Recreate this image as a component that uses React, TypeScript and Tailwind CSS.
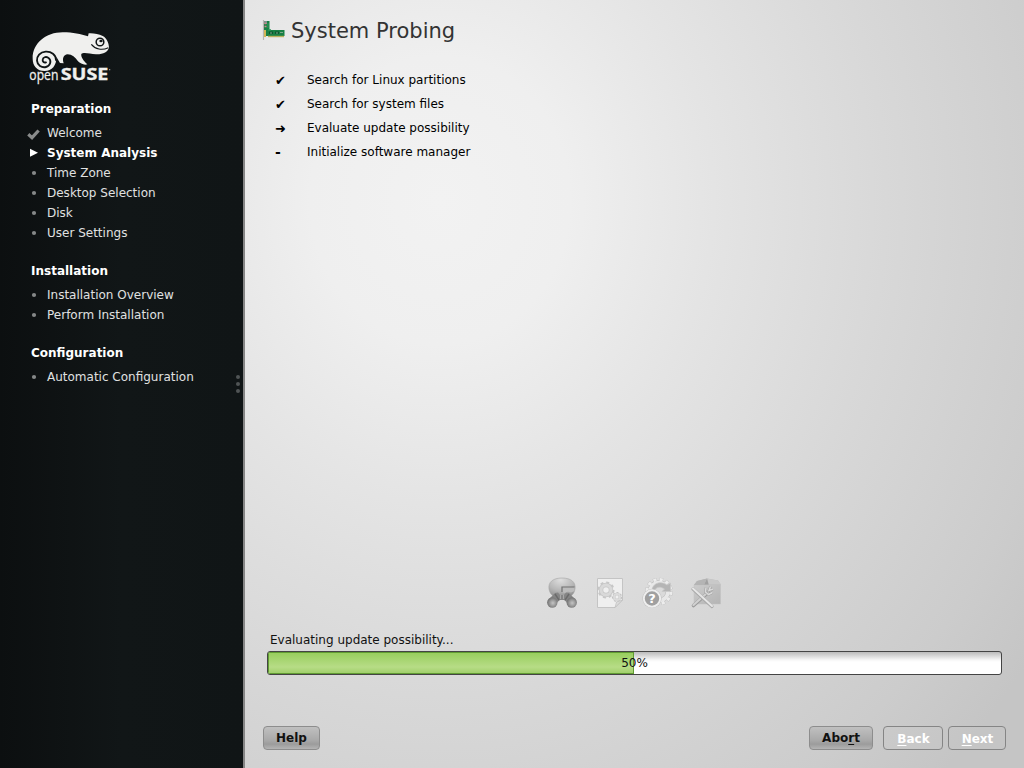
import React from "react";

type Step = { label: string; state?: "done" | "active" };

const groups: { title: string; steps: Step[] }[] = [
  {
    title: "Preparation",
    steps: [
      { label: "Welcome", state: "done" },
      { label: "System Analysis", state: "active" },
      { label: "Time Zone" },
      { label: "Desktop Selection" },
      { label: "Disk" },
      { label: "User Settings" },
    ],
  },
  {
    title: "Installation",
    steps: [{ label: "Installation Overview" }, { label: "Perform Installation" }],
  },
  { title: "Configuration", steps: [{ label: "Automatic Configuration" }] },
];

const tasks = [
  { mark: "✔", label: "Search for Linux partitions" },
  { mark: "✔", label: "Search for system files" },
  { mark: "➜", label: "Evaluate update possibility" },
  { mark: "-", label: "Initialize software manager" },
];

function Logo() {
  return (
    <svg width="110" height="75" viewBox="0 0 330 225" className="ml-5 block">
      <path
        fill="#f0f0ee"
        d="M38 116C37 70 78 37 128 37C160 37 182 43 204 49L206 40C220 39 236 42 248 48C260 54 266 68 267 82C265 96 248 104 228 103C208 101 190 96 184 102C182 110 190 122 202 133C192 136 181 131 174 124C166 111 156 104 143 103C130 105 126 115 131 130L120 129L109 110C110 136 96 153 74 153C51 153 38 137 38 116Z"
      />
      <path
        d="M108 120C108 104 94 94 77 95C60 96 50 108 51 122C52 136 65 144 78 141C91 138 95 123 87 115C80 108 69 111 68 119C67 125 72 129 78 127"
        fill="none"
        stroke="#0f1415"
        strokeWidth="5.5"
        strokeLinecap="round"
      />
      <circle cx="240" cy="66" r="11.5" fill="#f0f0ee" stroke="#0f1415" strokeWidth="4.5" />
      <ellipse cx="243" cy="63" rx="5" ry="4" fill="#0f1415" />
      <path d="M214 73C226 88 246 92 265 83" fill="none" stroke="#0f1415" strokeWidth="3.5" />
      <text x="28" y="180" textLength="87" lengthAdjust="spacingAndGlyphs" fill="#f0f0ee" stroke="#f0f0ee" strokeWidth="0.8" fontFamily="Open Sans, sans-serif" fontSize="43">
        open
      </text>
      <text x="122" y="181" textLength="143" lengthAdjust="spacingAndGlyphs" fill="#f0f0ee" stroke="#f0f0ee" strokeWidth="1" fontFamily="Open Sans, sans-serif" fontWeight="700" fontSize="49">
        SUSE
      </text>
      <circle cx="269" cy="149" r="2" fill="#b0b2b1" />
    </svg>
  );
}

function StepMark({ state }: { state?: "done" | "active" }) {
  return (
    <svg width="18" height="20" viewBox="0 0 18 20" className="block shrink-0">
      {state === "done" && <path d="M1.3 11.3L5 14.7L11.6 7.5" fill="none" stroke="#8a8c8c" strokeWidth="3.2" />}
      {state === "active" && <path d="M3 5.7V13.7L11 9.7Z" fill="#fff" />}
      {!state && <circle cx="7" cy="10" r="2.1" fill="#858888" />}
    </svg>
  );
}

function BoardIcon() {
  return (
    <svg width="24" height="22" viewBox="0 0 24 22" className="-ml-px mr-px block">
      <path d="M1.5 0V20" stroke="#b5b6b1" strokeWidth="1.2" />
      <path d="M2 1H7.5V10H22.5V16H2Z" fill="#178044" />
      <path d="M2 1H5V4H2Z" fill="#7f918c" />
      <path d="M2.5 3.5H4.5M2.5 6.5H4.5" stroke="#d0848a" strokeWidth="1.6" />
      <path d="M6 3V8M6 10H9" stroke="#2b9357" strokeWidth="1.3" />
      <path d="M3 10V17" stroke="#d0b657" strokeWidth="2" />
      <path d="M6 16.5H22" stroke="#b9b15d" strokeWidth="1.4" />
      <path d="M7 11.5H11V14H7ZM13 11.5H17V14H13Z" fill="#0c562d" />
      <path d="M8 13H10M14 13H16M18 12.5H21" stroke="#7fa68c" />
    </svg>
  );
}

function SearchIcon() {
  return (
    <svg width="32" height="32" viewBox="0 0 32 32">
      <defs>
        <radialGradient id="globe" cx=".45" cy=".1" r=".95">
          <stop stopColor="#dedede" />
          <stop offset=".55" stopColor="#b6b6b6" />
          <stop offset="1" stopColor="#888" />
        </radialGradient>
        <radialGradient id="lens" cx=".55" cy=".55" r=".5">
          <stop stopColor="#c4c4c4" />
          <stop offset=".5" stopColor="#a0a0a0" />
          <stop offset="1" stopColor="#787878" />
        </radialGradient>
      </defs>
      <path d="M3 12C2 5 7 1 16 1C25 1 30 5 29 12C28 18 24 21 16 21C8 21 4 18 3 12Z" fill="url(#globe)" stroke="#a5a5a5" strokeWidth=".6" />
      <path d="M16 10H28.5V14L25 15.5L22 14.5L19 16L16 15Z" fill="#bcbcbc" />
      <path d="M16 15V10H28.5" fill="none" stroke="#717171" strokeWidth="1.2" />
      <path d="M3 22L9 16L12 15.5L14 18H18L20 15.5L23 16L29 22L23 27L18 23H14L9 27Z" fill="#858585" />
      <path d="M9 17L13 23M23 17L19 23" stroke="#6a6a6a" strokeWidth="1.4" />
      <path d="M14.5 18V22M17.5 18V22" stroke="#a8a8a8" strokeWidth="1" />
      <circle cx="6.3" cy="25.5" r="5.2" fill="url(#lens)" />
      <circle cx="25.7" cy="25.5" r="5.2" fill="url(#lens)" />
    </svg>
  );
}

function Gear({ x, y, r, teeth, body, edge }: { x: number; y: number; r: number; teeth: number; body: string; edge: string }) {
  const circumference = 2 * Math.PI * r * 1.4;
  const dash = `${circumference / teeth / 2} ${circumference / teeth / 2}`;
  return (
    <g fill="none">
      <circle cx={x} cy={y} r={r * 1.4} stroke={edge} strokeWidth={r * 0.6} strokeDasharray={dash} />
      <circle cx={x} cy={y} r={r} stroke={edge} strokeWidth={r * 0.9} />
      <circle cx={x} cy={y} r={r} stroke={body} strokeWidth={r * 0.6} />
    </g>
  );
}

function FilesIcon() {
  return (
    <svg width="32" height="32" viewBox="0 0 32 32">
      <path d="M3.5 1.5H28.5V23L21 30.5H3.5Z" fill="#efefef" stroke="#c4c4c4" />
      <Gear x={12} y={13} r={5} teeth={8} body="#d9d9d9" edge="#c6c6c6" />
      <Gear x={23} y={20} r={3} teeth={7} body="#dbdbdb" edge="#c3c3c3" />
      <path d="M21 30.5L22.5 25L28.5 23Z" fill="#dcdcdc" stroke="#b9b9b9" strokeWidth=".6" />
    </svg>
  );
}

function UpdateIcon() {
  return (
    <svg width="32" height="32" viewBox="0 0 32 32">
      <g fill="none">
        <circle cx="17" cy="14.5" r="12" stroke="#bcbcbc" strokeWidth="3.6" strokeDasharray="3.7 2.58" />
        <circle cx="17" cy="14.5" r="9" stroke="#b8b8b8" strokeWidth="4.6" />
        <circle cx="17" cy="14.5" r="12" stroke="#ededed" strokeWidth="3" strokeDasharray="3.1 3.18" strokeDashoffset="-.3" />
        <circle cx="17" cy="14.5" r="9" stroke="#e8e8e8" strokeWidth="3.6" />
      </g>
      <path d="M10 12C12 5 20 4 25 8L28.5 6V14.5H20L22.5 12C18 9 14 10 12 14Z" fill="#b5b5b5" stroke="#c9c9c9" strokeWidth=".7" />
      <circle cx="10" cy="21.5" r="9.6" fill="#bcbcbc" />
      <circle cx="10" cy="21.5" r="8.2" fill="#a0a0a0" stroke="#eee" strokeWidth="2" />
      <text x="10" y="26.3" textAnchor="middle" fill="#fff" fontFamily="DejaVu Sans, sans-serif" fontWeight="700" fontSize="13">?</text>
    </svg>
  );
}

function PackageIcon() {
  return (
    <svg width="32" height="32" viewBox="0 0 32 32">
      <defs>
        <linearGradient id="box" x2="1" y2="1">
          <stop stopColor="#cbcbcb" />
          <stop offset="1" stopColor="#b4b4b4" />
        </linearGradient>
      </defs>
      <path d="M4 8H30.5V27H4Z" fill="url(#box)" stroke="#c0c0c0" strokeWidth=".5" />
      <path d="M4 8L7 4L17 1.5L28 3.5L31 8Z" fill="#bababa" />
      <path d="M17 1.5L19 7.5H31L28 3.5Z" fill="#c9c9c9" />
      <path d="M17 1.5L14 7.5L18.5 7.5Z" fill="#a0a0a0" />
      <path d="M4 8L7 4L17 1.5L14 8Z" fill="#b4b4b4" />
      <path d="M3.5 28.5L18 15.5" stroke="#9a9a9a" strokeWidth="3.6" strokeLinecap="round" />
      <path d="M3.5 28L18 15" stroke="#d0d0d0" strokeWidth="2.3" strokeLinecap="round" />
      <path d="M16 10.5L15.5 15L18.5 17.5L22.5 15.5M20.5 9.5L19 13.5L23 12" fill="none" stroke="#a2a2a2" strokeWidth="2.6" />
      <path d="M16 10.5L15.5 15L18.5 17.5L22.5 15.5M20.5 9.5L19 13.5L23 12" fill="none" stroke="#dadada" strokeWidth="1.5" />
      <path d="M3 12L22 29.5" stroke="#a8a8a8" strokeWidth="3.2" strokeLinecap="round" />
      <path d="M3 11.5L22 29" stroke="#e6e6e6" strokeWidth="2" strokeLinecap="round" />
    </svg>
  );
}

const enabledButton =
  "h-6 rounded-[4px] border border-[#8d8d8d] bg-[linear-gradient(#c0c0c0,#a9a9a9_60%,#9c9c9c_78%,#b4b4b4)] font-bold leading-[22px] text-[#111] flex justify-center";
const disabledButton =
  "h-6 rounded-[4px] border border-[#858585] font-bold leading-[24px] text-white flex justify-center pl-px";

export default function App() {
  return (
    <div className="flex h-[768px] w-[1024px] overflow-hidden font-['DejaVu_Sans',sans-serif] text-[12px] leading-5">
      <aside className="flex w-[245px] shrink-0 border-r-2 border-[#858585] bg-linear-to-r from-[#0c0f10] via-[#111617] to-[#101516] pt-5">
        <div className="w-[233px]">
          <Logo />
          <nav className="mt-1 flex flex-col gap-[18px] pl-[31px]">
            {groups.map((g) => (
              <section key={g.title}>
                <h2 className="mb-1 font-bold text-white">{g.title}</h2>
                <ul className="-ml-1">
                  {g.steps.map((s) => (
                    <li key={s.label} className="flex h-5 gap-0.5">
                      <StepMark state={s.state} />
                      <span className={s.state === "active" ? "font-bold text-white" : "text-[#e0e1e1]"}>{s.label}</span>
                    </li>
                  ))}
                </ul>
              </section>
            ))}
          </nav>
        </div>
        <div className="mt-[355px] flex w-[10px] flex-col items-center gap-[3px]">
          <i className="size-1 rounded-full bg-[#505455]" />
          <i className="size-1 rounded-full bg-[#505455]" />
          <i className="size-1 rounded-full bg-[#505455]" />
        </div>
      </aside>
      <main className="flex flex-1 flex-col bg-[radial-gradient(ellipse_720px_800px_at_195px_200px,#f2f2f2_0%,#efefef_18%,#e4e4e4_38%,#d8d8d8_62%,#cccccc_88%,#c5c5c5_100%)] pt-[19px] text-[#111]">
        <header className="flex h-6 items-center gap-1 pl-[18px]">
          <BoardIcon />
          <h1 className="text-[21px] leading-6 text-[#333]">System Probing</h1>
        </header>
        <ul className="mt-[25px]">
          {tasks.map((t) => (
            <li key={t.label} className="flex h-6 items-center pl-[30px] text-black">
              <span className={t.mark === "-" ? "w-8 text-[14px] font-bold" : "w-8 pt-px text-[13px]"}>{t.mark}</span>
              <span>{t.label}</span>
            </li>
          ))}
        </ul>
        <div className="mt-[413px] flex h-8 gap-4 pl-[301px]">
          <SearchIcon />
          <FilesIcon />
          <UpdateIcon />
          <PackageIcon />
        </div>
        <p className="mt-[21px] pl-[25px]">Evaluating update possibility...</p>
        <div className="relative mt-[1px] ml-[22px] h-6 w-[735px] overflow-hidden rounded-[3px] border border-[#444] bg-[linear-gradient(#bbb,#f7f7f7_8px,#fff_10px)]">
          <div className="h-full w-[366px] border border-[#609b32] bg-[linear-gradient(#98ce5e,#b7dc86_70%,#a1d06c)]" />
          <span className="absolute inset-0 text-center leading-[22px]">50%</span>
        </div>
        <footer className="mt-[51px] flex pl-[18px]">
          <button className={`${enabledButton} w-[57px]`}>Help</button>
          <button className={`${enabledButton} ml-[489px] w-[64px]`}>
            <span>Abo<u className="underline-offset-2">r</u>t</span>
          </button>
          <button className={`${disabledButton} ml-[10px] w-[60px]`}>
            <span><u className="underline-offset-2">B</u>ack</span>
          </button>
          <button className={`${disabledButton} ml-[5px] w-[58px]`}>
            <span><u className="underline-offset-2">N</u>ext</span>
          </button>
        </footer>
      </main>
    </div>
  );
}
